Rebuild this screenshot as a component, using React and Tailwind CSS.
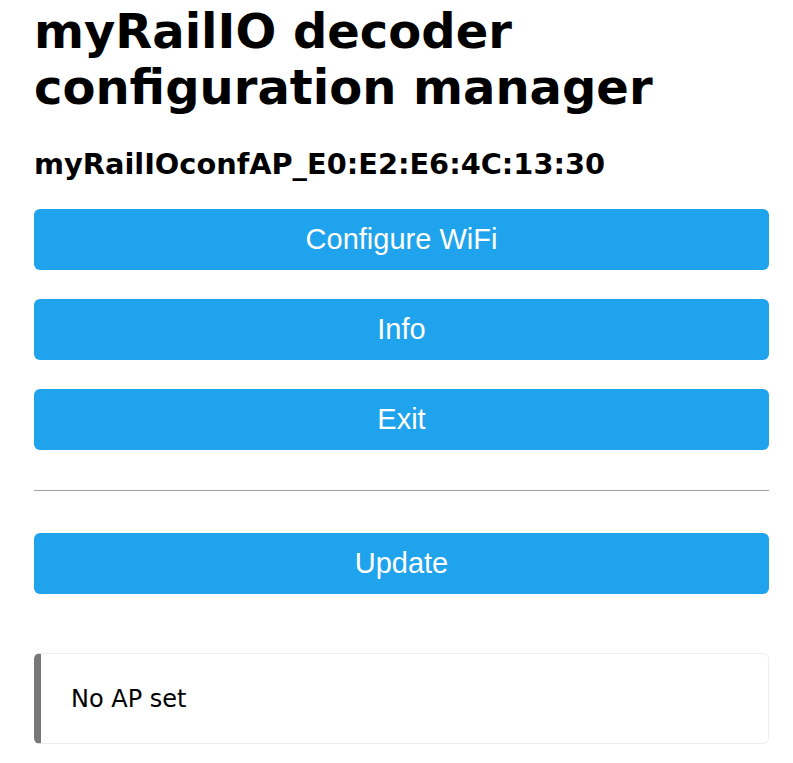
import React from "react";

const BUTTONS = ["Configure WiFi", "Info", "Exit"];

function PortalButton({ label }) {
  return (
    <button className="w-full h-[61px] rounded-[6px] bg-[#1fa3ec] text-white text-[29px] font-['Liberation_Sans',Arial,sans-serif] leading-none">
      {label}
    </button>
  );
}

export default function App() {
  return (
    <div className="min-h-screen bg-white text-black font-['DejaVu_Sans',Verdana,sans-serif]">
      <div className="px-[34px] pt-[3px] pb-[19px] w-[803px]">
        {/* Titles */}
        <h1 className="text-[48px] font-bold leading-[56px]">
          myRailIO decoder configuration manager
        </h1>
        <h3 className="mt-[33px] text-[28.8px] font-bold leading-[33px]">
          myRailIOconfAP_E0:E2:E6:4C:13:30
        </h3>

        {/* Menu */}
        <div className="mt-[28px] flex flex-col gap-[29px]">
          {BUTTONS.map((b) => (
            <PortalButton key={b} label={b} />
          ))}
        </div>

        <hr className="mt-[40px] border-0 border-t border-[#a0a0a0]" />

        <div className="mt-[42px]">
          <PortalButton label="Update" />
        </div>

        {/* Status message */}
        <div className="mt-[59px] h-[91px] flex items-center pl-[30px] border border-[#eeeeee] border-l-[7px] border-l-[#777777] rounded-[6px]">
          <span className="text-[24px]">No AP set</span>
        </div>
      </div>
    </div>
  );
}
